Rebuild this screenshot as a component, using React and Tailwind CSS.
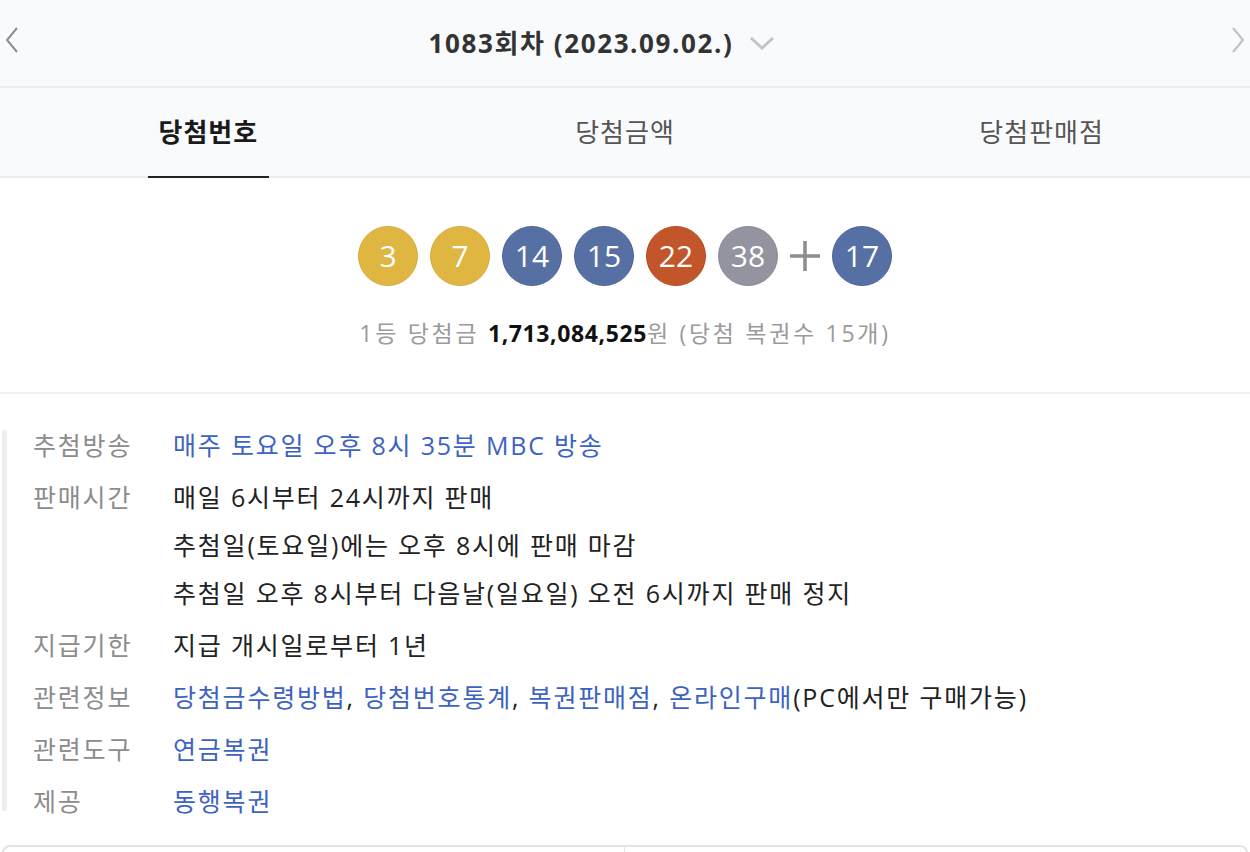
import React from "react";

const balls = [
  { n: 3, bg: "bg-[#e0b642]", border: "border-[#d6ac3a]" },
  { n: 7, bg: "bg-[#e0b642]", border: "border-[#d6ac3a]" },
  { n: 14, bg: "bg-[#5670a4]", border: "border-[#4e679a]" },
  { n: 15, bg: "bg-[#5670a4]", border: "border-[#4e679a]" },
  { n: 22, bg: "bg-[#c2552a]", border: "border-[#b54d25]" },
  { n: 38, bg: "bg-[#9394a0]", border: "border-[#888996]" },
];

const Ball = ({ n, bg, border }) => (
  <div
    className={`w-[60px] h-[60px] rounded-full border ${bg} ${border} flex items-center justify-center text-white text-[30px] leading-none`}
  >
    {n}
  </div>
);

const Link = ({ children }) => <span className="text-[#3d63c2]">{children}</span>;

const Row = ({ label, children }) => (
  <div className="flex">
    <div className="w-[140px] shrink-0 text-[#8c8c8c]">{label}</div>
    <div className="flex flex-col text-[#222]">{children}</div>
  </div>
);

const App = () => {
  return (
    <div
      className="w-[1250px] min-h-[852px] bg-white overflow-hidden"
      style={{ fontFamily: '"Open Sans", "Noto Sans CJK KR", sans-serif' }}
    >
      {/* round header */}
      <div className="h-[88px] bg-[#f9fafc] border-b-2 border-[#eaecef] flex items-center justify-between px-[4px]">
        <svg width="16" height="30" viewBox="0 0 16 30" className="mt-[-4px]">
          <path d="M13 2 L3 14 L13 26" fill="none" stroke="#8e8e8e" strokeWidth="2" />
        </svg>
        <div className="flex items-center gap-[16px] mr-[46px]">
          <span className="text-[26px] font-bold text-[#333] tracking-[1.6px]">1083회차 (2023.09.02.)</span>
          <svg width="26" height="16" viewBox="0 0 26 16">
            <path d="M2 3 L13 13 L24 3" fill="none" stroke="#c4c4c4" strokeWidth="3" />
          </svg>
        </div>
        <svg width="16" height="30" viewBox="0 0 16 30" className="mt-[-4px]">
          <path d="M3 2 L13 14 L3 26" fill="none" stroke="#c0c0c0" strokeWidth="2" />
        </svg>
      </div>

      {/* tabs */}
      <div className="h-[90px] bg-[#f9fafc] border-b-2 border-[#eaecef] grid grid-cols-3 text-[26px] tracking-[1px]">
        <div className="flex justify-center">
          <div className="relative w-[121px] flex items-center justify-center font-bold text-[#1a1a1a]">
            당첨번호
            <div className="absolute left-0 right-0 bottom-[-2px] h-[2px] bg-[#222]" />
          </div>
        </div>
        <div className="flex items-center justify-center text-[#555]">당첨금액</div>
        <div className="flex items-center justify-center text-[#555]">당첨판매점</div>
      </div>

      {/* numbers */}
      <div className="pt-[48px] pb-[43px] border-b-2 border-[#eef0f3] flex flex-col items-center">
        <div className="flex items-center gap-[12px]">
          {balls.map((b) => (
            <Ball key={b.n} {...b} />
          ))}
          <svg width="34" height="34" viewBox="0 0 34 34" className="mx-[-2px]">
            <path d="M17 2 V32 M2 17 H32" stroke="#8d8d8d" strokeWidth="3.5" />
          </svg>
          <Ball n={17} bg="bg-[#5670a4]" border="border-[#4e679a]" />
        </div>
        <div className="mt-[31px] text-[23px] leading-[32px] tracking-[2.7px] text-[#9a9a9a]">
          1등 당첨금 <b className="text-[#111] font-bold tracking-[0.6px]">1,713,084,525</b>원 (당첨 복권수 15개)
        </div>
      </div>

      {/* info list */}
      <div className="flex pt-[27px] pl-[2px] pb-[20px]">
        <div className="w-[5px] rounded-full bg-[#ededf1] mt-[9px] mb-[14px]" />
        <div className="flex flex-col gap-[4px] pl-[26px] text-[25px] leading-[48px] tracking-[1.8px]">
          <Row label="추첨방송">
            <Link>매주 토요일 오후 8시 35분 MBC 방송</Link>
          </Row>
          <Row label="판매시간">
            <span>매일 6시부터 24시까지 판매</span>
            <span>추첨일(토요일)에는 오후 8시에 판매 마감</span>
            <span>추첨일 오후 8시부터 다음날(일요일) 오전 6시까지 판매 정지</span>
          </Row>
          <Row label="지급기한">
            <span>지급 개시일로부터 1년</span>
          </Row>
          <Row label="관련정보">
            <span>
              <Link>당첨금수령방법</Link>, <Link>당첨번호통계</Link>, <Link>복권판매점</Link>,{" "}
              <Link>온라인구매</Link>(PC에서만 구매가능)
            </span>
          </Row>
          <Row label="관련도구">
            <Link>연금복권</Link>
          </Row>
          <Row label="제공">
            <Link>동행복권</Link>
          </Row>
        </div>
      </div>

      {/* bottom box */}
      <div className="mx-[2px] h-[40px] border-2 border-[#e4e4e4] rounded-t-[8px] grid grid-cols-2">
        <div className="border-r border-[#e4e4e4]" />
        <div />
      </div>
    </div>
  );
};

export default App;
